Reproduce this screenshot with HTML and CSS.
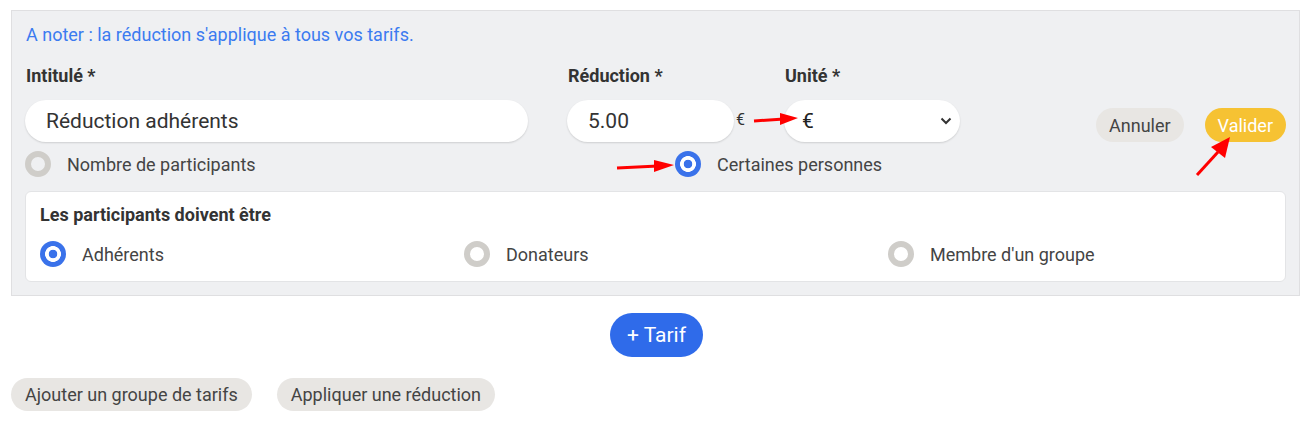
FILE: index.html
```html
<!DOCTYPE html>
<html lang="fr">
<head>
<meta charset="utf-8">
<title>Réduction</title>
<link rel="stylesheet" href="styles.css">
</head>
<body>
<div class="page">
  <div class="panel">
    <p class="note">A noter : la réduction s'applique à tous vos tarifs.</p>
    <div class="fields">
      <div class="field f-name">
        <label class="lbl">Intitulé *</label>
        <div class="input">Réduction adhérents</div>
      </div>
      <div class="field f-red">
        <label class="lbl">Réduction *</label>
        <div class="inline">
          <div class="input small">5.00</div>
          <span class="cur">€</span>
        </div>
      </div>
      <div class="field f-unit">
        <label class="lbl">Unité *</label>
        <div class="input select">€
          <svg class="chev" width="12" height="8" viewBox="0 0 12 8"><path d="M1.5 1.5 L6 6 L10.5 1.5" fill="none" stroke="#333" stroke-width="2"/></svg>
        </div>
      </div>
      <div class="actions">
        <button class="btn gray">Annuler</button>
        <button class="btn yellow">Valider</button>
      </div>
    </div>
    <div class="radios">
      <div class="radio r-first"><span class="dot off"></span><span>Nombre de participants</span></div>
      <div class="radio"><span class="dot on"></span><span>Certaines personnes</span></div>
    </div>
    <div class="box">
      <div class="box-title">Les participants doivent être</div>
      <div class="box-grid">
        <div class="radio"><span class="dot on"></span><span>Adhérents</span></div>
        <div class="radio"><span class="dot off"></span><span>Donateurs</span></div>
        <div class="radio"><span class="dot off"></span><span>Membre d'un groupe</span></div>
      </div>
    </div>
  </div>
  <div class="center">
    <button class="btn blue">+ Tarif</button>
  </div>
  <div class="bottom">
    <button class="btn gray lg">Ajouter un groupe de tarifs</button>
    <button class="btn gray lg">Appliquer une réduction</button>
  </div>
  <svg class="arrows" width="1313" height="433" viewBox="0 0 1313 433">
    <g fill="#f00" stroke="#f00">
      <line x1="617" y1="168" x2="658" y2="166" stroke-width="3"/>
      <polygon points="654,160 674,165 654,172" stroke="none"/>
      <line x1="754" y1="121" x2="784" y2="119" stroke-width="3"/>
      <polygon points="780,113 798,118 780,125" stroke="none"/>
      <line x1="1197" y1="175" x2="1218" y2="152" stroke-width="3"/>
      <polygon points="1230,137 1225,158 1211,147" stroke="none"/>
    </g>
  </svg>
</div>
</body>
</html>
```

FILE: styles.css
```css
* { box-sizing: border-box; }
html, body { margin: 0; padding: 0; background: #fff; }
body {
  font-family: Roboto, "Liberation Sans", sans-serif;
  color: #333;
  width: 1313px;
  height: 433px;
  overflow: hidden;
}
.page {
  position: relative;
  padding: 10px 0 0 11px;
  width: 1313px;
  height: 433px;
}
.panel {
  width: 1289px;
  background: #eff0f2;
  border: 1px solid #dfdfe1;
  padding: 14px 13px 13px 13px;
}
.note {
  margin: 0 0 0 1px;
  font-size: 18px;
  line-height: 20px;
  color: #3b7bf0;
}
.fields {
  display: flex;
  align-items: flex-end;
  margin-top: 21px;
}
.field { display: flex; flex-direction: column; }
.lbl {
  font-weight: 700;
  font-size: 18px;
  line-height: 20px;
  color: #333;
  margin-bottom: 14px;
  margin-left: 1px;
}
.f-name { width: 503px; margin-right: 39px; }
.f-red { width: 217px; }
.f-unit { width: 176px; }
.input {
  height: 42px;
  background: #fff;
  border-radius: 21px;
  box-shadow: 0 1px 2px rgba(0, 0, 0, 0.14);
  font-size: 21px;
  line-height: 42px;
  padding-left: 21px;
  color: #333;
}
.inline { display: flex; align-items: center; }
.input.small { width: 167px; }
.cur { font-size: 16px; margin-left: 2px; margin-top: -3px; color: #333; }
.select {
  position: relative;
  padding-left: 18px;
  color: #222;
}
.chev { position: absolute; right: 8px; top: 17px; }
.actions {
  margin-left: auto;
  display: flex;
  gap: 21px;
}
.btn {
  font-family: Roboto, "Liberation Sans", sans-serif;
  border: none;
  border-radius: 17px;
  height: 34px;
  font-size: 18px;
  padding: 0 13px;
  cursor: pointer;
}
.gray { background: #e8e6e3; color: #444; }
.yellow { background: #f6c233; color: #fff; padding: 0 13px; }
.blue {
  background: #2f6bea;
  color: #fff;
  height: 44px;
  border-radius: 22px;
  font-size: 21px;
  padding: 0 17px;
}
.radios {
  display: flex;
  margin-top: 9px;
  height: 26px;
}
.r-first { width: 650px; }
.radio {
  display: flex;
  align-items: center;
  font-size: 18px;
  color: #444;
}
.dot {
  width: 26px;
  height: 26px;
  border-radius: 50%;
  margin-right: 16px;
  flex: none;
}
.dot.off { border: 6px solid #cfcdc9; }
.dot.on {
  background: radial-gradient(circle, #3a72ea 0 4px, #fff 4.6px 7.6px, #3a72ea 8.2px);
}
.box {
  margin-top: 14px;
  background: #fff;
  border: 1px solid #e3e4e6;
  border-radius: 6px;
  padding: 13px 14px 14px 14px;
}
.box-title {
  font-weight: 700;
  font-size: 18px;
  line-height: 20px;
  color: #333;
}
.box-grid {
  margin-top: 16px;
  display: grid;
  grid-template-columns: 424px 424px 1fr;
  height: 26px;
}
.center {
  display: flex;
  justify-content: center;
  margin-top: 17px;
  width: 1291px;
}
.bottom {
  margin-top: 21px;
  display: flex;
  gap: 25px;
}
.btn.lg { height: 33px; padding: 0 14px; }
.arrows {
  position: absolute;
  left: 0;
  top: 0;
  pointer-events: none;
}
```
